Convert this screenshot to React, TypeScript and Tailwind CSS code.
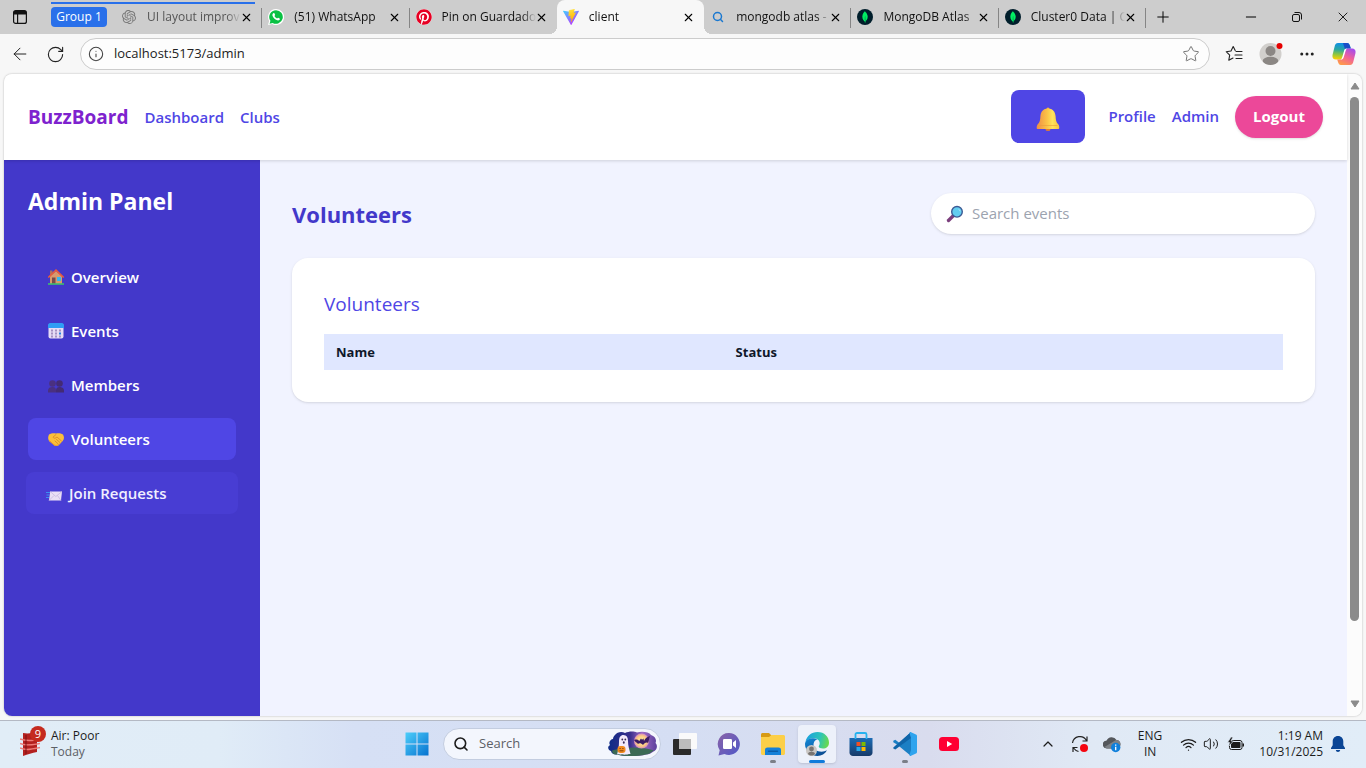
import type { ReactNode } from "react";
import { SiOpenai, SiMongodb } from "react-icons/si";
import { FaPinterest } from "react-icons/fa";
import {
  ArrowLeft,
  ChevronUp,
  Ellipsis,
  Info,
  Minus,
  Plus,
  RotateCw,
  Search,
  Star,
  Volume2,
  Wifi,
  X,
} from "lucide-react";

/* ---------- Browser favicons and chrome icons ---------- */

const ViteIcon = () => (
  <svg viewBox="0 0 32 32" className="h-4 w-4">
    <defs>
      <linearGradient id="vite-a" x1="0" y1="0" x2="0.7" y2="1">
        <stop offset="0" stopColor="#41d1ff" />
        <stop offset="1" stopColor="#bd34fe" />
      </linearGradient>
      <linearGradient id="vite-b" x1="0.4" y1="0" x2="0.6" y2="1">
        <stop offset="0" stopColor="#ffea83" />
        <stop offset="0.1" stopColor="#ffdd35" />
        <stop offset="1" stopColor="#ffa800" />
      </linearGradient>
    </defs>
    <path d="M31.9 4.7 17 31.4a.8.8 0 0 1-1.4 0L.1 4.7A.8.8 0 0 1 1 3.500l15.100 2.700h.3l14.800-2.700a.8.8 0 0 1 .7 1.200z" fill="url(#vite-a)" />
    <path d="M23 0 12 2.200a.4.4 0 0 0-.3.400L11 14c0 .3.200.500.500.400l3.100-.7c.3-.1.500.2.500.5l-1 4.500c0 .3.300.5.500.4l1.900-.6c.3-.1.600.2.500.5l-1.400 7c-.1.400.500.700.700.300l9.300-18.700c.2-.3-.1-.6-.4-.600l-3.200.600c-.300.1-.6-.2-.500-.5L23.500.5A.4.4 0 0 0 23 0z" fill="url(#vite-b)" />
  </svg>
);

const WhatsAppIcon = () => (
  <svg viewBox="0 0 16 16" className="h-4 w-4">
    <path d="M8 0a8 8 0 1 1-3.800 15L0 16l1.100-4A8 8 0 0 1 8 0z" fill="#fff" />
    <path d="M8 1.200a6.800 6.800 0 1 1-3.400 12.700l-3 .8.800-2.900A6.800 6.800 0 0 1 8 1.200z" fill="#0ac143" />
    <path d="M5.300 4.200c.5-.4 1-.3 1.200.2l.6 1.300c.1.400-.5.900-.7 1.200.6 1.200 1.500 2 2.700 2.600.4-.3.700-.9 1.100-.8l1.400.7c.5.300.3.900 0 1.300-.6.700-1.500.9-2.400.6C6.800 10.500 5.300 9 4.500 6.800c-.3-1 0-2 .8-2.600z" fill="#fff" />
  </svg>
);

const PinterestIcon = () => (
  <span className="flex h-4 w-4 rounded-full bg-white text-[#e60023]">
    <FaPinterest size={16} />
  </span>
);

const MongoIcon = () => (
  <span className="flex h-4 w-4 items-center justify-center rounded-full bg-[#001e2b] text-[#00ed64]">
    <SiMongodb size={12} />
  </span>
);

const TabActionsIcon = () => (
  <svg viewBox="0 0 16 16" className="h-4 w-4" fill="none" stroke="#111" strokeWidth="1.2">
    <rect x="1.6" y="1.6" width="12.8" height="12.8" rx="2" />
    <path d="M2 3h12M2 4.500h12" strokeWidth="1.8" />
    <path d="M5.600 5v9" />
  </svg>
);

const RestoreIcon = () => (
  <svg viewBox="0 0 12 12" className="h-3 w-3" fill="none" stroke="#111">
    <rect x="1.5" y="3.5" width="7" height="7" rx="1.5" />
    <path d="M3.500 1.500h4.500a2.500 2.500 0 0 1 2.500 2.500v4.500" />
  </svg>
);

const FavoritesIcon = () => (
  <svg viewBox="0 0 18 18" className="h-[18px] w-[18px]" fill="none" stroke="#222" strokeWidth="1.1" strokeLinejoin="round" strokeLinecap="round">
    <path d="M10.200 5.500 8.200 1.500 6 6 1.200 6.700l3.500 3.500-.9 5L8 13" />
    <path d="M11 6.500h6M10 10h7M11 13.500h6" />
  </svg>
);

const AvatarIcon = () => (
  <svg viewBox="0 0 24 24" className="h-6 w-6">
    <defs>
      <clipPath id="avatar-clip">
        <circle cx="11.5" cy="12" r="11" />
      </clipPath>
    </defs>
    <circle cx="11.5" cy="12" r="11" fill="#d1cfcc" />
    <g clipPath="url(#avatar-clip)" fill="#8b8784">
      <circle cx="11.5" cy="9" r="5" />
      <ellipse cx="11.5" cy="19" rx="7.8" ry="4.2" />
    </g>
    <circle cx="20.5" cy="4" r="3" fill="#e60000" />
  </svg>
);

const CopilotIcon = () => (
  <svg viewBox="0 0 24 24" className="h-6 w-6">
    <defs>
      <linearGradient id="cp-a" x1="0.4" y1="0" x2="0.3" y2="1">
        <stop offset="0" stopColor="#0f8fe8" />
        <stop offset="0.4" stopColor="#2aa7a0" />
        <stop offset="0.7" stopColor="#8fc63f" />
        <stop offset="1" stopColor="#ffd000" />
      </linearGradient>
      <linearGradient id="cp-b" x1="0.8" y1="0" x2="0.3" y2="1">
        <stop offset="0" stopColor="#a24bf0" />
        <stop offset="0.5" stopColor="#f0609a" />
        <stop offset="1" stopColor="#ff9a4a" />
      </linearGradient>
    </defs>
    <path d="M6 1h9c2 0 2.500 1.500 3 3l.8 2.500h-3c-2 0-2.600 1-3.200 3l-1.500 5c-.6 2-1.200 3-3.200 3H4c-2.500 0-4-1.500-3.500-4.500l2-8C3 2.500 4 1 6 1z" fill="url(#cp-a)" />
    <path d="M11 1h4c2 0 2.500 1.500 3 3l.8 2.500h-3c-1.300 0-2 .5-2.600 1.600z" fill="#1a4fc8" />
    <path d="M18 23H9c-2 0-2.500-1.500-3-3l-.8-2.500h3c2 0 2.600-1 3.200-3l1.500-5c.6-2 1.200-3 3.200-3H20c2.500 0 4 1.500 3.500 4.500l-2 8c-.5 2.500-1.500 4-3.500 4z" fill="url(#cp-b)" />
    <path d="M12.300 8c.5-1 1.200-1.500 2.700-1.500-1 .8-1.300 2-1.700 3.500l-1.600 5.200c-.5 1.500-1.200 2.300-2.900 2.300 1-.8 1.300-2 1.700-3.300z" fill="#fff" />
  </svg>
);

/* ---------- Emoji-style drawings used by the dashboard ---------- */

const BellEmoji = () => (
  <svg viewBox="0 0 24 24" className="h-6 w-6">
    <defs>
      <linearGradient id="bell-g" x1="0" y1="0" x2="1" y2="0">
        <stop offset="0" stopColor="#ef8d45" />
        <stop offset="0.45" stopColor="#fbc247" />
        <stop offset="0.7" stopColor="#ffe35a" />
        <stop offset="1" stopColor="#f9c33f" />
      </linearGradient>
    </defs>
    <circle cx="12" cy="2" r="1.6" fill="#f4b13f" />
    <ellipse cx="12" cy="22.5" rx="2.5" ry="1.5" fill="#e07b35" />
    <path d="M12 1.500c4.600 0 7.400 3.200 7.600 7.800.2 4 .6 5.800 2.600 8 1.200 1.400 1.500 4.700.4 4.700H1.400C.3 22 .6 18.700 1.800 17.300c2-2.200 2.400-4 2.600-8C4.600 4.700 7.400 1.500 12 1.500z" fill="url(#bell-g)" />
    <path d="M2.500 18.500h19" stroke="#e99a3c" strokeWidth="1" opacity="0.6" />
  </svg>
);

const MagnifierEmoji = () => (
  <svg viewBox="0 0 18 18" className="h-[18px] w-[18px]">
    <path d="m2.500 15.500 5-5" stroke="#7b3f7d" strokeWidth="3.4" strokeLinecap="round" />
    <circle cx="11" cy="6.8" r="5.3" fill="#62cdf0" stroke="#3d5a94" strokeWidth="1.4" />
    <path d="M12.500 4.300c1 .4 1.500 1 1.700 2" stroke="#a9e8fb" fill="none" />
  </svg>
);

const HouseEmoji = () => (
  <svg viewBox="0 0 16 16" className="h-4 w-4">
    <path d="M2 1.500h2.500V7H2z" fill="#a9715f" />
    <path d="M2 7.500 8 2l6 5.500V15H2z" fill="#d99a6c" />
    <path d="M4 8.500h3.500V15H4z" fill="#7a4b4a" />
    <rect x="9" y="8" width="4" height="4" fill="#35b7f0" />
    <path d="M.8 8 8 1.200 15.200 8" stroke="#ea5a3c" strokeWidth="1.7" fill="none" strokeLinecap="round" />
    <path d="M0 15h16" stroke="#3fbf6d" strokeWidth="1.6" />
  </svg>
);

const CalendarEmoji = () => (
  <svg viewBox="0 0 16 16" className="h-4 w-4">
    <rect x="0.5" y="0.5" width="15" height="15" rx="2" fill="#e6dcf5" />
    <path d="M0 5V2.500A2.500 2.500 0 0 1 2.500 0h11A2.500 2.500 0 0 1 16 2.500V5z" fill="#2f9df5" />
    <g fill="#a492c2">
      <rect x="3" y="6.5" width="2" height="2" />
      <rect x="7" y="6.5" width="2" height="2" />
      <rect x="11" y="6.5" width="2" height="2" />
      <rect x="3" y="9.5" width="2" height="2" />
      <rect x="7" y="9.5" width="2" height="2" />
      <rect x="3" y="12.5" width="2" height="2" />
      <rect x="7" y="12.5" width="2" height="2" />
      <rect x="11" y="12.5" width="2" height="2" />
    </g>
    <rect x="11" y="9.5" width="2" height="2" fill="#2583e0" />
  </svg>
);

const PeopleEmoji = () => (
  <svg viewBox="0 0 16 16" className="h-4 w-4">
    <g fill="#4a3080">
      <circle cx="4.5" cy="6.5" r="3.3" />
      <path d="M0 15.500v-2c0-2.500 2-3.500 4.500-3.500S8 11 8 13.500v2z" />
    </g>
    <g fill="#432b74">
      <circle cx="11.5" cy="6.5" r="3.3" />
      <path d="M8 15.500v-2c0-2.500 1.500-3.500 3.500-3.500s4.500 1 4.500 3.500v2z" />
    </g>
  </svg>
);

const HandshakeEmoji = () => (
  <svg viewBox="0 0 16 16" className="h-4 w-4">
    <path d="M1 3.500C3 2.200 5.500 2 8 2.400 10.500 2 13 2.200 15 3.500c1.500 2.500 1.200 4.800-.3 6.500l-3.700 4c-1 1-3.500 1.500-5 .2L1.500 10.500C0 9-.3 6 1 3.500z" fill="#fbbf3a" />
    <path d="M1.200 9.500 6 13.800c1.300 1 3.500.8 4.500-.2l1-1" stroke="#e8962e" fill="none" />
    <path d="M8 3.500 5 6.200c.8 1.600 2.700 1.200 4-.2l4.500 4M8.500 8.500l3.500 3M7 10l3 2.700" stroke="#d98a2a" strokeWidth="0.9" fill="none" strokeLinecap="round" />
  </svg>
);

const EnvelopeEmoji = () => (
  <svg viewBox="0 0 16 16" className="h-4 w-4">
    <path d="M0 7.500h4M.5 10h3M0 12.500h3" stroke="#3b8ff0" strokeWidth="1" />
    <path d="M4.200 6.500H16L15 15.500H3z" fill="#eadff5" />
    <path d="m4.200 6.500 5.600 5 6.200-5M3 15.500l5-5M15 15.500l-3.500-5" stroke="#c3b1dc" strokeWidth="0.7" fill="none" />
  </svg>
);

/* ---------- Taskbar icons ---------- */

const WindowsIcon = () => (
  <svg viewBox="0 0 24 24" className="h-6 w-6">
    <defs>
      <linearGradient id="win-g" gradientUnits="userSpaceOnUse" x1="0" y1="0" x2="24" y2="24">
        <stop offset="0" stopColor="#4fd0fb" />
        <stop offset="1" stopColor="#0470cf" />
      </linearGradient>
    </defs>
    <path d="M.5.500h11v11H.5zM12.500.500h11v11h-11zM.5 12.500h11v11H.5zM12.500 12.500h11v11h-11z" fill="url(#win-g)" />
  </svg>
);

const HalloweenArt = () => (
  <svg viewBox="0 0 50 26" className="h-[26px] w-[50px]">
    <defs>
      <linearGradient id="hw-g" x1="0" y1="0" x2="1" y2="0">
        <stop offset="0" stopColor="#0d2a86" />
        <stop offset="0.45" stopColor="#3a2f8c" />
        <stop offset="0.7" stopColor="#a06bc4" />
        <stop offset="1" stopColor="#5b3f9c" />
      </linearGradient>
      <radialGradient id="hw-moon">
        <stop offset="0" stopColor="#fff0a8" />
        <stop offset="0.7" stopColor="#fbc981" />
        <stop offset="1" stopColor="#d58ac0" />
      </radialGradient>
    </defs>
    <path d="M7 4c2-3 7-4 10-2 4-2 9-2 12-.5 5-1.500 12-.5 14 2.500 4 1 6 5 4.500 8 2 2 2 6-1 8-3 1-3 3-8 3.500-8 2-22 2-29 0-4 .5-6-1-6.500-3.500-3-1-4-4-1-6C0 11 3 8 5 8c0-2 1-3 2-4z" fill="url(#hw-g)" />
    <path d="M4 19.500c12-4 32-4 42 0-3 1-3 3.500-8 4-8 2-22 2-29 0-3 .5-5-1-5-4z" fill="#3c6a55" />
    <circle cx="33.5" cy="10" r="7.5" fill="url(#hw-moon)" />
    <path d="M26 9c3-1 4 0 5.500 1 .5-1.500 1-2 1.500-2.500l1 1.200 1.500-1.200.5 2.500c1.500-3 3-4 6-5-1 2.500-1 5-2 7-2-1-3.500 0-5 2-1.500-2-4-2.500-5-1-1-1.500-3-2-4-4z" fill="#3b1c63" />
    <path d="M11 11c0-5 1.500-7 4.500-7S20 6 20 10c0 5 1.500 9 2.500 13-2-.5-3 1-4.500.5-2 .5-3-.5-5 0-1.500.3-2.500-.5-4 0C10 20 11 16 11 11z" fill="#f3e9fa" />
    <circle cx="14.3" cy="8.5" r="0.9" fill="#3b2b55" />
    <circle cx="17.3" cy="8.5" r="0.9" fill="#3b2b55" />
    <ellipse cx="15.8" cy="11.5" rx="0.9" ry="1.2" fill="#3b2b55" />
    <rect x="9.5" y="15" width="8" height="7" rx="3" fill="#f28a1e" />
    <path d="M11.500 17.500h1.200M14.300 17.500h1.200M11.500 19.800h4" stroke="#7a3a08" strokeWidth="0.9" />
  </svg>
);

const TaskViewIcon = () => (
  <svg viewBox="0 0 24 24" className="h-6 w-6">
    <rect x="0" y="7" width="18" height="16" rx="1" fill="#2b2b2b" />
    <rect x="6" y="1" width="18" height="16" rx="1" fill="#fafafa" />
    <rect x="6" y="7" width="12" height="10" fill="#bdbdbd" />
  </svg>
);

const ChatIcon = () => (
  <svg viewBox="0 0 24 24" className="h-6 w-6">
    <defs>
      <linearGradient id="chat-g" x1="0" y1="0" x2="1" y2="1">
        <stop offset="0" stopColor="#8a63a8" />
        <stop offset="1" stopColor="#5058c8" />
      </linearGradient>
    </defs>
    <path d="M12 1a11 11 0 1 1-4.500 21.100L1.500 23.500l1.200-5.300A11 11 0 0 1 12 1z" fill="url(#chat-g)" />
    <rect x="6" y="7" width="9" height="10" rx="1.2" fill="#fff" />
    <path d="m16 10.500 3-2.500v8l-3-2.500z" fill="#fff" />
  </svg>
);

const FolderIcon = () => (
  <svg viewBox="0 0 24 24" className="h-6 w-6">
    <path d="M0 2.500C0 1.700.7 1 1.500 1H8l2.500 2.500L9 6H0z" fill="#d79a14" />
    <path d="M0 5h8l2.500-2H22.500c.8 0 1.500.7 1.500 1.500v17c0 .8-.7 1.500-1.500 1.500h-21C.7 23 0 22.300 0 21.500z" fill="#fccf48" />
    <path d="M4 23v-5c0-1.700 1-2.500 2.500-2.500h11c1.500 0 2.500.8 2.500 2.500v5z" fill="#1580d8" />
    <path d="M7.500 19.200h9" stroke="#0a5ca8" strokeWidth="1.4" strokeLinecap="round" />
  </svg>
);

const EdgeIcon = () => (
  <svg viewBox="0 0 26 26" className="h-[26px] w-[26px]">
    <defs>
      <linearGradient id="edge-a" x1="0" y1="0.3" x2="1" y2="0.5">
        <stop offset="0" stopColor="#1aa0e0" />
        <stop offset="0.6" stopColor="#2cc4b8" />
        <stop offset="1" stopColor="#6ad94c" />
      </linearGradient>
      <linearGradient id="edge-b" x1="0" y1="0" x2="0.6" y2="1">
        <stop offset="0" stopColor="#1489d8" />
        <stop offset="1" stopColor="#0c4f94" />
      </linearGradient>
    </defs>
    <path d="M1.500 11C2.500 5 7.500 1 13.500 1 20.500 1 25 6 25 11.500c0 4-2.700 6-6 6-2.500 0-4.300-1-4.300-2 0-.7 1-1.200 1-3.200 0-3-2.700-5-6.200-5-3.500 0-6.500 1.700-8 3.700z" fill="url(#edge-a)" />
    <path d="M1.500 11c1-2.300 4-3.800 7.500-3.800 1.500 0 3 .4 4.200 1.200C10.500 9 9.500 11.500 9.500 14c0 4 3.500 6.700 8 6.700 2.200 0 4-.5 5.500-1.400C21 23 17.500 25 13.500 25 6.500 25 1 19.500 1 13c0-.7.200-1.400.5-2z" fill="url(#edge-b)" />
    <circle cx="7.5" cy="19.5" r="5.5" fill="#c9c6c3" />
    <circle cx="7.5" cy="18" r="2.4" fill="#787471" />
    <path d="M4 23c0-3 7-3 7 0-2 2-5 2-7 0z" fill="#787471" />
  </svg>
);

const StoreIcon = () => (
  <svg viewBox="0 0 24 24" className="h-6 w-6">
    <defs>
      <linearGradient id="store-g" x1="0" y1="0" x2="0" y2="1">
        <stop offset="0" stopColor="#1c6cb5" />
        <stop offset="1" stopColor="#173a68" />
      </linearGradient>
    </defs>
    <path d="M.5 6h23v14.500c0 2-1.500 3.500-3.500 3.500H4c-2 0-3.500-1.500-3.500-3.500z" fill="url(#store-g)" />
    <path d="M6.500 7V2.500C6.500 1.700 7.200 1 8 1h8c.8 0 1.500.7 1.500 1.500V7" stroke="#27b2ee" strokeWidth="1.8" fill="none" />
    <path d="M7.500 10H11.500v4h-4z" fill="#f25022" />
    <path d="M12.500 10H16.500v4h-4z" fill="#7fba00" />
    <path d="M7.500 15H11.500v4h-4z" fill="#28a8ea" />
    <path d="M12.500 15H16.500v4h-4z" fill="#ffb900" />
  </svg>
);

const VsCodeIcon = () => (
  <svg viewBox="0 0 24 24" className="h-6 w-6">
    <path d="M18 0 6.500 11 2.300 7.700.3 8.700v1.600L4 12.500 18 24z" fill="#1b7fc4" />
    <path d="M.3 15.500v1l2 1L18 6V0z" fill="#0f65a9" />
    <path d="M17.500 0 23 2.500c.6.300 1 .8 1 1.500v16c0 .7-.4 1.200-1 1.500L17.500 24c-.7 0-1-.5-1-1L18 18V6L16.500 1c0-.5.300-1 1-1z" fill="#2fa4ee" />
  </svg>
);

const YouTubeIcon = () => (
  <svg viewBox="0 0 20 14" className="h-[14px] w-5">
    <rect width="20" height="14" rx="3.5" fill="#ff0033" />
    <path d="m8 4 5.200 3L8 10z" fill="#fff" />
  </svg>
);

const LungsIcon = () => (
  <svg viewBox="0 0 20 24" className="h-6 w-5">
    <path d="M3 1c5 1 10 0 14-1v20c-5 1-9 2-14 4z" fill="#b3201f" />
    <path d="M0 7c6 3 13 1 20 1M0 11.500c6 3 13 1 20 0M0 16c6 3 13 1 20-.5" stroke="#ee7b77" strokeWidth="1.4" fill="none" />
    <path d="M6 3v19" stroke="#7d1214" strokeWidth="2" opacity="0.5" />
  </svg>
);

const SyncIcon = () => (
  <svg viewBox="0 0 18 18" className="h-[18px] w-[18px]" fill="none" stroke="#222" strokeWidth="1.2">
    <path d="M1.500 8A7.500 7.500 0 0 1 15.500 5.500M16 1.500v4.500h-4.500M2 17v-4.500h4.500M2.500 13c1.500 2 3 3 5 3.500" />
    <circle cx="13" cy="13" r="4" fill="#f5050f" stroke="none" />
  </svg>
);

const CloudIcon = () => (
  <svg viewBox="0 0 18 18" className="h-[18px] w-[18px]">
    <path d="M4 13.500a4 4 0 0 1-.4-8A5.500 5.500 0 0 1 13.500 5 4.300 4.300 0 0 1 14 13.500z" fill="#55585c" />
    <path d="M1.500 12 13 5c3 0 4.500 2 4.500 4.500l-6 4H4z" fill="#7d8186" />
    <circle cx="12.7" cy="12.5" r="4.7" fill="#0f7fdb" />
    <path d="M12.700 11.800v3.400M12.700 9.600v1.200" stroke="#fff" strokeWidth="1.3" />
  </svg>
);

const BatteryIcon = () => (
  <svg viewBox="0 0 18 14" className="h-[14px] w-[18px]">
    <rect x="2.5" y="3.5" width="12.5" height="9" rx="2" fill="none" stroke="#1b1b1b" />
    <rect x="4" y="5" width="9.5" height="6" rx="0.8" fill="#1b1b1b" />
    <path d="M15.500 6.500H17v3h-1.500z" fill="#1b1b1b" />
    <path d="M4 0 .5 5.500h2.200L1.500 9.500 6.500 4H4L6 0z" fill="#1b1b1b" stroke="#e1ebf6" strokeWidth="0.7" />
  </svg>
);

const NotificationIcon = () => (
  <svg viewBox="0 0 14 16" className="h-4 w-[14px]" fill="#0a4595">
    <path d="M7 0c3.300 0 5.300 2.400 5.300 5.500v3.700L14 12v1H0v-1l1.700-2.800V5.500C1.700 2.400 3.700 0 7 0zM4.800 14h4.400C9 15.200 8.200 16 7 16s-2-.8-2.200-2z" />
  </svg>
);

/* ---------- Data ---------- */

type Tab = { title: string; icon: ReactNode; kind?: "active" | "grouped"; divider?: boolean };

const tabs: Tab[] = [
  { title: "UI layout improv", icon: <SiOpenai size={14} className="text-[#777]" />, kind: "grouped", divider: true },
  { title: "(51) WhatsApp", icon: <WhatsAppIcon />, divider: true },
  { title: "Pin on Guardado", icon: <PinterestIcon /> },
  { title: "client", icon: <ViteIcon />, kind: "active" },
  { title: "mongodb atlas -", icon: <Search size={12} strokeWidth={3} className="text-[#1a78d0]" />, divider: true },
  { title: "MongoDB Atlas", icon: <MongoIcon />, divider: true },
  { title: "Cluster0 Data | C", icon: <MongoIcon />, divider: true },
];

const menu = [
  { label: "Overview", icon: <HouseEmoji />, className: "" },
  { label: "Events", icon: <CalendarEmoji />, className: "" },
  { label: "Members", icon: <PeopleEmoji />, className: "" },
  { label: "Volunteers", icon: <HandshakeEmoji />, className: "bg-[#4f46e5]" },
  { label: "Join Requests", icon: <EnvelopeEmoji />, className: "-mx-0.5 bg-[#483dd3] text-[#f1efff]" },
];

const apps = [
  { name: "Task View", icon: <TaskViewIcon />, state: "" },
  { name: "Chat", icon: <ChatIcon />, state: "" },
  { name: "File Explorer", icon: <FolderIcon />, state: "open" },
  { name: "Microsoft Edge", icon: <EdgeIcon />, state: "focused" },
  { name: "Microsoft Store", icon: <StoreIcon />, state: "" },
  { name: "Visual Studio Code", icon: <VsCodeIcon />, state: "open" },
  { name: "YouTube", icon: <YouTubeIcon />, state: "" },
];

/* ---------- Browser chrome ---------- */

function BrowserTab({ title, icon, kind, divider }: Tab) {
  const active = kind === "active";
  return (
    <div
      className={`relative flex h-full min-w-0 flex-1 items-center pr-[10px] pl-[6px] ${active ? "rounded-t-lg bg-[#f7f7f7]" : ""}`}
    >
      {kind === "grouped" && <span className="absolute top-[2px] right-[7px] -left-16 h-[2px] bg-[#2970ea]" />}
      {active && (
        <>
          <span className="absolute bottom-0 -left-2 h-2 w-2 bg-[radial-gradient(circle_at_0_0,#cdcdcd_8px,#f7f7f7_8px)]" />
          <span className="absolute -right-2 bottom-0 h-2 w-2 bg-[radial-gradient(circle_at_100%_0,#cdcdcd_8px,#f7f7f7_8px)]" />
        </>
      )}
      <button className="flex min-w-0 flex-1 items-center gap-[10px] text-left">
        <span className="flex h-4 w-4 shrink-0 items-center justify-center">{icon}</span>
        <span
          className={`min-w-0 flex-1 overflow-hidden whitespace-nowrap [mask-image:linear-gradient(to_right,#000_calc(100%-14px),transparent)] ${kind === "grouped" ? "text-[#555]" : "text-[#111]"}`}
        >
          {title}
        </span>
      </button>
      <button aria-label={`Close ${title}`} className="flex w-[11px] justify-center">
        <X size={13} strokeWidth={2} className="shrink-0" />
      </button>
      {divider && <span className="absolute top-2 right-0 h-5 w-px bg-[#858585]" />}
    </div>
  );
}

function BrowserChrome() {
  return (
    <header className="text-[12px]">
      <div className="flex h-[34px] items-center bg-[#cdcdcd]">
        <button aria-label="Tab actions" className="ml-3">
          <TabActionsIcon />
        </button>
        <button className="mr-2 ml-[23px] h-5 w-14 shrink-0 rounded bg-[#2970ea] text-white">Group 1</button>
        <div className="flex h-full min-w-0 flex-1">
          {tabs.map((tab) => (
            <BrowserTab key={tab.title} {...tab} />
          ))}
        </div>
        <div className="flex w-[220px] shrink-0 items-center pr-[15px] pl-2">
          <button aria-label="New tab" className="mr-auto">
            <Plus size={18} strokeWidth={1.3} />
          </button>
          <div className="flex items-center gap-8">
            <button aria-label="Minimize">
              <Minus size={16} strokeWidth={1.5} />
            </button>
            <button aria-label="Restore">
              <RestoreIcon />
            </button>
            <button aria-label="Close">
              <X size={16} strokeWidth={1.3} />
            </button>
          </div>
        </div>
      </div>
      <div className="flex h-10 items-center bg-[#f7f7f7] px-[10px] text-[#222]">
        <button aria-label="Back">
          <ArrowLeft size={20} strokeWidth={1.2} />
        </button>
        <button aria-label="Refresh" className="mr-[15px] ml-4">
          <RotateCw size={19} strokeWidth={1.4} />
        </button>
        <div className="flex h-8 min-w-0 flex-1 items-center gap-2 rounded-full border border-[#cccccc] bg-[#fdfdfd] pr-[9px] pl-[7px]">
          <Info size={16} strokeWidth={1.6} className="text-[#444]" />
          <input
            aria-label="Address"
            defaultValue="localhost:5173/admin"
            className="min-w-0 flex-1 bg-transparent pl-[2px] text-[13px] outline-none"
          />
          <button aria-label="Add to favorites">
            <Star size={18} strokeWidth={1.2} className="text-[#666]" />
          </button>
        </div>
        <div className="flex w-[146px] shrink-0 items-center justify-between pl-[15px]">
          <button aria-label="Favorites">
            <FavoritesIcon />
          </button>
          <button aria-label="Account">
            <AvatarIcon />
          </button>
          <button aria-label="More">
            <Ellipsis size={18} />
          </button>
          <button aria-label="Copilot">
            <CopilotIcon />
          </button>
        </div>
      </div>
    </header>
  );
}

/* ---------- Dashboard ---------- */

function Navbar() {
  return (
    <nav className="relative z-10 flex items-center justify-between bg-white px-6 pt-4 pb-[17px] text-[15px] font-semibold text-[#4f46e5] shadow-[0_1px_3px_rgba(0,0,0,0.15)]">
      <div className="flex items-center gap-4 pt-px">
        <a href="#home" className="text-[19px] font-bold text-[#7e22ce]">
          BuzzBoard
        </a>
        <a href="#dashboard">Dashboard</a>
        <a href="#clubs">Clubs</a>
      </div>
      <div className="flex items-center gap-4">
        <button aria-label="Notifications" className="mr-[7px] flex h-[53px] w-[74px] items-center justify-center rounded-lg bg-[#4f46e5] pt-1">
          <BellEmoji />
        </button>
        <a href="#profile">Profile</a>
        <a href="#admin">Admin</a>
        <button className="h-[42px] w-[88px] rounded-full bg-[#ec4899] font-bold text-white shadow">Logout</button>
      </div>
    </nav>
  );
}

function Sidebar() {
  return (
    <aside className="w-64 shrink-0 bg-[#4338ca] p-6 text-white shadow-xl">
      <h2 className="mb-[38px] text-[23px] leading-[34px] font-bold">Admin Panel</h2>
      <ul className="flex flex-col gap-3">
        {menu.map((item) => (
          <li key={item.label} className="flex flex-col">
            <button className={`flex h-[42px] items-center gap-[7px] rounded-lg px-5 text-[15px] font-semibold ${item.className}`}>
              {item.icon}
              {item.label}
            </button>
          </li>
        ))}
      </ul>
    </aside>
  );
}

function Content() {
  return (
    <main className="min-w-0 flex-1 bg-[#f1f3ff] px-8 py-[33px]">
      <div className="mb-6 flex items-center justify-between">
        <h1 className="text-[22px] leading-10 font-bold text-[#4338ca]">Volunteers</h1>
        <label className="flex h-[41px] w-96 items-center gap-2 rounded-full bg-white px-[15px] shadow">
          <MagnifierEmoji />
          <input
            aria-label="Search events"
            placeholder="Search events"
            className="min-w-0 flex-1 bg-transparent text-[15px] outline-none placeholder:text-[#9ca3af]"
          />
        </label>
      </div>
      <section className="rounded-2xl bg-white p-8 shadow">
        <h3 className="mb-4 text-[19px] leading-7 font-medium text-[#4f46e5]">Volunteers</h3>
        <table className="w-full table-fixed text-left text-[13px] leading-5 text-[#0f172a]">
          <thead className="bg-[#e0e7ff]">
            <tr>
              <th className="w-5/12 px-3 py-2 font-bold">Name</th>
              <th className="px-3 py-2 font-bold">Status</th>
            </tr>
          </thead>
        </table>
      </section>
    </main>
  );
}

function Scrollbar() {
  return (
    <div className="flex w-[15px] shrink-0 flex-col items-center bg-[#fcfcfc] py-2">
      <svg viewBox="0 0 10 8" className="h-2 w-[10px] shrink-0" fill="#8b8b8b">
        <path d="M5 1 9 7H1z" stroke="#8b8b8b" strokeLinejoin="round" />
      </svg>
      <div className="my-[7px] flex w-[9px] flex-1 flex-col">
        <div className="h-[88%] rounded-full bg-[#8b8b8b]" />
      </div>
      <svg viewBox="0 0 10 8" className="h-2 w-[10px] shrink-0" fill="#8b8b8b">
        <path d="M5 7 9 1H1z" stroke="#8b8b8b" strokeLinejoin="round" />
      </svg>
    </div>
  );
}

/* ---------- Taskbar ---------- */

function Taskbar() {
  return (
    <footer className="grid h-12 grid-cols-[1fr_auto_1fr] items-center border-t border-[#b4b9c4] bg-[linear-gradient(90deg,#e1edf7_0%,#e0ecf7_16%,#d6e0f5_26%,#d5def3_50%,#d9dcee_68%,#e0e9f5_80%,#e1edf8_100%)] pb-px text-[12px] text-[#1c1c1c]">
      <button className="flex items-center gap-[5px] pl-5 text-left leading-4">
        <span className="relative flex h-8 w-[26px] items-start pt-1">
          <LungsIcon />
          <span className="absolute -top-[2px] right-0 flex h-4 w-4 items-center justify-center rounded-full bg-[#c52b1f] text-[11px] text-white">9</span>
        </span>
        <span>
          <span className="block">Air: Poor</span>
          <span className="block text-[#5c6066]">Today</span>
        </span>
      </button>
      <div className="flex items-center">
        <button aria-label="Start" className="flex w-11 justify-center">
          <WindowsIcon />
        </button>
        <label className="mr-[2px] ml-1 flex h-8 w-[218px] items-center rounded-full border border-[#c3cde0] bg-[#f3f6fd] pr-[2px] pl-[9px]">
          <Search size={16} strokeWidth={2.4} className="shrink-0" />
          <input
            aria-label="Search"
            placeholder="Search"
            className="ml-[10px] min-w-0 flex-1 bg-transparent text-[13px] outline-none placeholder:text-[#5c6066]"
          />
          <HalloweenArt />
        </label>
        {apps.map((app) => (
          <button key={app.name} aria-label={app.name} className="flex w-11 justify-center">
            <span
              className={`relative flex h-[38px] w-[38px] items-center justify-center rounded ${app.state === "focused" ? "bg-[#edf1fa] shadow-sm" : ""}`}
            >
              {app.icon}
              {app.state === "open" && <span className="absolute bottom-0 h-[3px] w-[6px] rounded-full bg-[#7b7f88]" />}
              {app.state === "focused" && <span className="absolute bottom-0 h-[3px] w-4 rounded-full bg-[#0f7bdb]" />}
            </span>
          </button>
        ))}
      </div>
      <div className="flex items-center justify-end pr-[21px] leading-4">
        <ChevronUp size={16} strokeWidth={1.8} className="mr-[15px]" />
        <span className="mr-[14px]">
          <SyncIcon />
        </span>
        <span className="mr-[17px]">
          <CloudIcon />
        </span>
        <span className="mr-[18px] text-center">
          ENG
          <br />
          IN
        </span>
        <Wifi size={17} strokeWidth={1.8} className="mr-[6px]" />
        <Volume2 size={16} strokeWidth={1.5} className="mr-2" />
        <span className="mr-[14px]">
          <BatteryIcon />
        </span>
        <span className="mr-2 text-right">
          1:19 AM
          <br />
          10/31/2025
        </span>
        <NotificationIcon />
      </div>
    </footer>
  );
}

export default function App() {
  return (
    <div className="flex min-h-screen flex-col bg-[#f7f7f7] font-['Open_Sans','Noto_Sans',sans-serif]">
      <BrowserChrome />
      <div className="mx-1 mb-1 flex flex-1 overflow-hidden rounded-lg shadow-[0_0_2px_rgba(0,0,0,0.3)]">
        <div className="flex min-w-0 flex-1 flex-col">
          <Navbar />
          <div className="flex flex-1">
            <Sidebar />
            <Content />
          </div>
        </div>
        <Scrollbar />
      </div>
      <Taskbar />
    </div>
  );
}
